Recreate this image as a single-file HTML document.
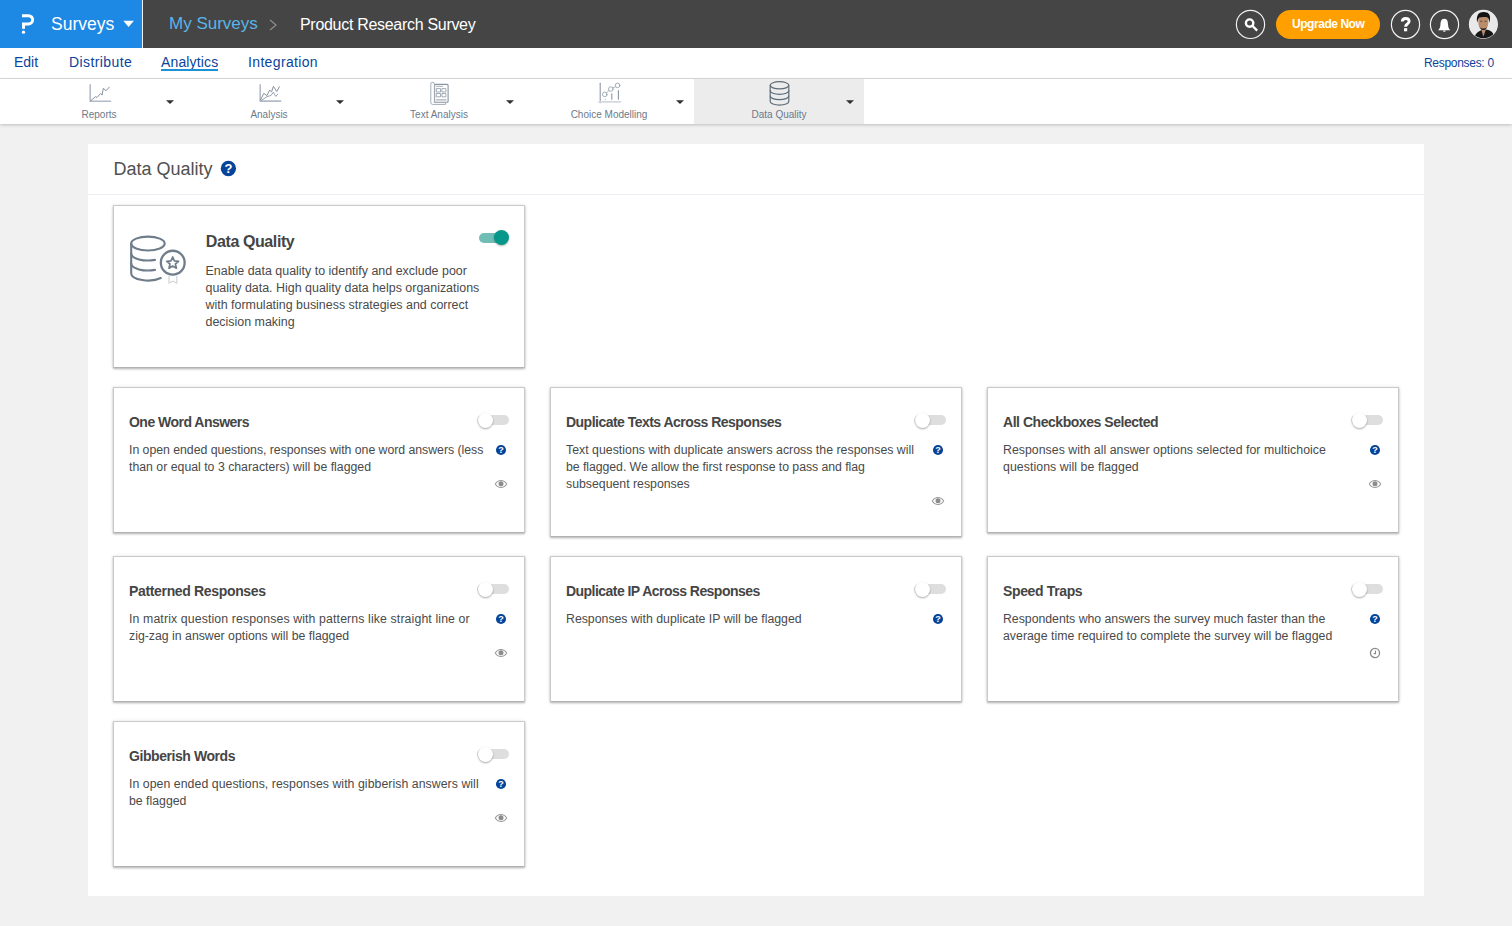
<!DOCTYPE html>
<html><head><meta charset="utf-8">
<style>
*{box-sizing:border-box;margin:0;padding:0}
html,body{width:1512px;height:926px;overflow:hidden;background:#f1f1f1;font-family:"Liberation Sans",sans-serif;position:relative}
.a{position:absolute;white-space:nowrap}
#top{position:absolute;left:0;top:0;width:1512px;height:48px;background:#454545}
#brand{position:absolute;left:0;top:0;width:142px;height:48px;background:#1e88e5}
#sep{position:absolute;left:142px;top:0;width:1px;height:48px;background:#f2f2f2}
#nav{position:absolute;left:0;top:48px;width:1512px;height:31px;background:#fff;border-bottom:1px solid #dcdcdc}
.nv{position:absolute;top:0;font-size:14px;line-height:14px;color:#0a449b}
#tb{position:absolute;left:0;top:79px;width:1512px;height:45px;background:#fff;box-shadow:0 1px 3px rgba(0,0,0,.22)}
.tab{position:absolute;top:0;width:170px;height:45px}
.tab .cap{position:absolute;left:0;width:140px;text-align:center;font-size:10px;line-height:10px;top:30px;color:#6d7a88}
.tri{position:absolute;width:0;height:0;border-left:4px solid transparent;border-right:4px solid transparent;border-top:4px solid #2f2f2f}
#panel{position:absolute;left:88px;top:144px;width:1336px;height:752px;background:#fff}
#ph{position:absolute;left:0;top:0;width:1336px;height:51px;border-bottom:1px solid #eceef3}
.card{position:absolute;width:412px;background:#fff;border:1px solid #cacaca;border-bottom-color:#b2b2b2;box-shadow:0 1px 2px rgba(0,0,0,.28),0 0 5px rgba(0,0,0,.07)}
.ttl{position:absolute;font-weight:bold;font-size:14px;line-height:14px;letter-spacing:-0.6px;color:#454545;white-space:nowrap}
.body{position:absolute;font-size:12.3px;line-height:17px;color:#4a4a4a;white-space:nowrap}
.tg{position:absolute;width:32px;height:10px;border-radius:5px;background:#dedede}
.tg i{position:absolute;top:-2.5px;left:1px;width:15px;height:15px;border-radius:50%;background:#fff;box-shadow:0 1px 2px rgba(0,0,0,.35)}
.tg.on{background:#70bdb5;width:29px}
.tg.on i{left:15px;top:-3px;background:#05978a;box-shadow:0 1px 2px rgba(0,0,0,.3)}
.hq{position:absolute;width:10px;height:10px}
.eye{position:absolute;width:12px;height:8px}
</style></head><body>
<div id="top">
  <div id="brand"></div>
  <div id="sep"></div>
  <svg class="a" style="left:0;top:0" width="142" height="48" viewBox="0 0 142 48">
    <path d="M22,15.7 H28.5 A4.1,4.1 0 0 1 28.5,23.9 H23.5 V28.7" fill="none" stroke="#fff" stroke-width="3"/>
    <circle cx="23.5" cy="32.2" r="1.6" fill="#fff"/>
    <path d="M123.3,20.8 H133.9 L128.6,27 Z" fill="#fff"/>
  </svg>
  <div class="a" style="left:51px;top:15px;font-size:17.5px;line-height:18px;color:#fff">Surveys</div>
  <div class="a" style="left:169px;top:15px;font-size:17px;line-height:18px;color:#5ab4ea">My Surveys</div>
  <svg class="a" style="left:266px;top:17px" width="14" height="16" viewBox="0 0 14 16"><path d="M4,3 L10,8 L4,13" fill="none" stroke="#8c8c8c" stroke-width="1.3"/></svg>
  <div class="a" style="left:300px;top:16px;font-size:16px;line-height:17px;letter-spacing:-0.3px;color:#fff">Product Research Survey</div>
  <svg class="a" style="left:1230px;top:0" width="282" height="48" viewBox="1230 0 282 48">
    <circle cx="1250.5" cy="24.4" r="14.1" fill="none" stroke="#f2f2f2" stroke-width="1.2"/>
    <circle cx="1249.6" cy="23.1" r="3.7" fill="none" stroke="#fff" stroke-width="2.4"/>
    <path d="M1252.3,25.8 L1257.2,30.6" stroke="#fff" stroke-width="2.3"/>
    <rect x="1276" y="10" width="104" height="29" rx="14.5" fill="#ffa000"/>
    <circle cx="1405.5" cy="24.5" r="14.1" fill="none" stroke="#f2f2f2" stroke-width="1.2"/>
    <circle cx="1444.5" cy="24.5" r="14.1" fill="none" stroke="#f2f2f2" stroke-width="1.2"/>
    <path d="M1444.3,18.7 C1441.2,18.7 1440.6,21.5 1440.4,25 C1440.2,27.6 1439.6,28.9 1438,30.3 L1450.4,30.3 C1448.8,28.9 1448.3,27.6 1448.1,25 C1447.9,21.5 1447.4,18.7 1444.3,18.7 Z" fill="#fff"/>
    <path d="M1442.8,30.5 A1.6,1.6 0 0 0 1445.9,30.5 Z" fill="#fff"/>
    <defs><clipPath id="av"><circle cx="1483.4" cy="24.3" r="14"/></clipPath></defs>
    <circle cx="1483.4" cy="24.3" r="14.5" fill="#f4f4f4"/>
    <g clip-path="url(#av)">
      <rect x="1469" y="9" width="30" height="31" fill="#e9e9ea"/>
      <path d="M1474,40 C1474.5,35 1476.5,32.5 1480.5,30.5 L1483.3,29.5 L1487,29.8 C1491,30.5 1494,32.5 1495,40 Z" fill="#161616"/>
      <path d="M1481.2,29.2 L1483.3,36.8 L1486,29.3 Z" fill="#b48a70"/>
      <path d="M1478.3,19.5 C1478.3,16.5 1480.5,15.5 1483.3,15.5 C1486.3,15.5 1488.4,16.5 1488.4,19.5 L1488.2,24 C1487.8,27.8 1485.8,29.8 1483.3,29.8 C1480.8,29.8 1478.8,27.8 1478.4,24 Z" fill="#b98d6c"/>
      <path d="M1479.5,27 C1480.5,29.5 1482,30 1483.3,30 C1484.8,30 1486.2,29.5 1487.2,27 C1486,28.3 1484.8,28.6 1483.3,28.6 C1481.8,28.6 1480.6,28.3 1479.5,27 Z" fill="#2a1e1a"/>
      <path d="M1477.2,22.8 C1476.2,17 1477.6,13.5 1480.6,12.4 C1482.5,11.6 1485.5,11.7 1487.5,12.8 C1490.2,14.3 1490.6,18.2 1489.5,22.8 C1489,20 1488.6,18.4 1487.6,17.6 C1485.6,16.8 1481.5,16.8 1479.2,17.6 C1478.2,18.6 1477.8,20.3 1477.2,22.8 Z" fill="#121212"/>
      <path d="M1480.3,21.3 H1482.2 M1484.6,21.3 H1486.5" stroke="#4a3328" stroke-width="0.9"/>
    </g>
  </svg>
  <div class="a" style="left:1292px;top:17.5px;font-size:12px;line-height:12px;font-weight:bold;letter-spacing:-0.45px;color:#fff">Upgrade Now</div>
  <svg class="a" style="left:1390px;top:10px" width="30" height="30" viewBox="1390 10 30 30"><path d="M1402.3,21.6 C1402.3,19.5 1403.6,18.5 1405.7,18.5 C1407.8,18.5 1409.1,19.7 1409.1,21.3 C1409.1,23 1407.9,23.5 1407,24.2 C1406,24.9 1405.6,25.4 1405.6,26.8" fill="none" stroke="#fff" stroke-width="2.9"/><rect x="1404" y="28.2" width="3.2" height="3.1" fill="#fff"/></svg>
</div>
<div id="nav">
  <div class="nv" style="left:14px;top:7px">Edit</div>
  <div class="nv" style="left:69px;top:7px;letter-spacing:0.4px">Distribute</div>
  <div class="nv" style="left:161px;top:7px;letter-spacing:0.15px">Analytics</div>
  <div class="a" style="left:161px;top:21px;width:57px;height:2px;background:#1e90d6"></div>
  <div class="nv" style="left:248px;top:7px;letter-spacing:0.35px">Integration</div>
  <div class="a" style="left:1424px;top:9px;font-size:12px;line-height:12px;letter-spacing:-0.3px;color:#0a449b">Responses: 0</div>
</div>
<div id="tb">
  <div class="a" style="left:694px;top:0;width:170px;height:45px;background:#ececec"></div>
  <svg class="a" style="left:0;top:-79px" width="900" height="124" viewBox="0 0 900 124">
    <g fill="none" stroke-linecap="round" stroke-linejoin="round">
      <!-- reports -->
      <path d="M90.2,84.7 V101.2 H110.5" stroke="#b3bcc6" stroke-width="1.6"/>
      <path d="M90.5,101 L95.4,96.7 L97,97.4 L100.6,93.5 L102.1,95.1 L103.3,88.3 L106.1,90.7 L109.3,87.1" stroke="#7b8794" stroke-width="0.9"/>
      <!-- analysis -->
      <path d="M260.2,84.7 V101.1 H280.7" stroke="#b3bcc6" stroke-width="1.6"/>
      <path d="M260.7,99.8 L263.8,93.3 L266.9,95.6 L269.5,90.2 L271.6,91.7 L273.4,86.3 L276.8,91.5 L279.4,86.8" stroke="#7b8794" stroke-width="0.9"/>
      <path d="M260.7,100.8 L266.9,96.7 L271.1,95.4 L273.2,92.2 L275.8,96.4 L277.8,94.1" stroke="#8d98a4" stroke-width="0.9"/>
      <!-- text analysis -->
      <rect x="434.6" y="84.4" width="13.5" height="17.8" rx="1" stroke="#8995a2" stroke-width="1.1"/>
      <path d="M434.4,102.4 V84 A1.8,1.8 0 0 0 430.8,84 V102.6 A1.8,1.8 0 0 0 432.6,104.4 H445.6 V102.4" stroke="#a3adb8" stroke-width="1"/>
      <path d="M436.5,86.3 H442.5" stroke="#9aa4af" stroke-width="0.9"/>
      <rect x="436.7" y="88.6" width="3.8" height="3.4" stroke="#98a3ae" stroke-width="0.9"/>
      <rect x="442.3" y="88.6" width="3.6" height="3.4" stroke="#98a3ae" stroke-width="0.9"/>
      <rect x="436.7" y="93.5" width="3.8" height="3.3" stroke="#98a3ae" stroke-width="0.9"/>
      <rect x="442.3" y="93.5" width="3.6" height="3.3" stroke="#98a3ae" stroke-width="0.9"/>
      <path d="M436.5,99.8 H446" stroke="#a6b0ba" stroke-width="1.2"/>
      <!-- choice modelling -->
      <path d="M600.2,83.3 V102.8" stroke="#8e99a5" stroke-width="1.1"/>
      <path d="M599,101.9 H620.5" stroke="#d3d8de" stroke-width="1.6"/>
      <path d="M606.3,93 L609,90.5 M612.4,88 L615.8,86.5" stroke="#a3adb8" stroke-width="0.9"/>
      <circle cx="604.8" cy="94.4" r="2.3" stroke="#9aa4af" stroke-width="0.9"/>
      <circle cx="610.8" cy="89.1" r="2.3" stroke="#9aa4af" stroke-width="0.9"/>
      <circle cx="617.6" cy="85.4" r="2.3" stroke="#9aa4af" stroke-width="0.9"/>
      <path d="M611.8,93.8 V99.2 M618.4,90.6 V99.2" stroke="#8995a2" stroke-width="1.1"/>
      <circle cx="605.3" cy="99.3" r="0.5" fill="#8995a2" stroke="none"/>
      <!-- database -->
      <ellipse cx="779.5" cy="85.3" rx="9.3" ry="3.6" stroke="#5f6c79" stroke-width="1.2"/>
      <path d="M770.2,85.3 V101.5 A9.3,3.6 0 0 0 788.8,101.5 V85.3" stroke="#5f6c79" stroke-width="1.2"/>
      <path d="M770.2,90.7 A9.3,3.6 0 0 0 788.8,90.7 M770.2,96.1 A9.3,3.6 0 0 0 788.8,96.1" stroke="#5f6c79" stroke-width="1.2"/>
    </g>
    <g fill="#2f2f2f">
      <path d="M166,100.2 H174 L170,104 Z"/>
      <path d="M336,100.2 H344 L340,104 Z"/>
      <path d="M506,100.2 H514 L510,104 Z"/>
      <path d="M676,100.2 H684 L680,104 Z"/>
      <path d="M846,100.2 H854 L850,104 Z"/>
    </g>
  </svg>
  <div class="a cap" style="left:14px;top:31px;width:170px;text-align:center;font-size:10px;line-height:10px;color:#6d7a88">Reports</div>
  <div class="a cap" style="left:184px;top:31px;width:170px;text-align:center;font-size:10px;line-height:10px;color:#6d7a88">Analysis</div>
  <div class="a cap" style="left:354px;top:31px;width:170px;text-align:center;font-size:10px;line-height:10px;color:#6d7a88">Text Analysis</div>
  <div class="a cap" style="left:524px;top:31px;width:170px;text-align:center;font-size:10px;line-height:10px;color:#6d7a88">Choice Modelling</div>
  <div class="a cap" style="left:694px;top:31px;width:170px;text-align:center;font-size:10px;line-height:10px;color:#6d7a88">Data Quality</div>
</div>
<div id="panel">
<div id="ph">
<div class="a" style="left:25.5px;top:16px;font-size:18px;line-height:18px;color:#505050">Data Quality</div>
<svg class="a" style="left:132px;top:16px" width="17" height="17" viewBox="0 0 17 17"><circle cx="8.4" cy="8.5" r="7.65" fill="#06449a"/><text x="8.4" y="13.2" text-anchor="middle" font-family="Liberation Sans" font-weight="bold" font-size="13" fill="#fff">?</text></svg>
</div>
<div class="card" style="left:25px;top:61px;height:163px">
<svg class="a" style="left:0;top:0" width="100" height="100" viewBox="114 206 100 100">
 <g fill="none" stroke="#6f7c8a" stroke-width="2.1" stroke-linecap="round">
  <ellipse cx="147.95" cy="243.55" rx="16.75" ry="6.95"/>
  <path d="M131.2,253.55 A16.75,6.95 0 0 0 155,259.85"/>
  <path d="M131.2,263.55 A16.75,6.95 0 0 0 155,269.85"/>
  <path d="M131.2,243.55 V273.55 A16.75,6.95 0 0 0 160.8,278"/>
  <circle cx="172.75" cy="262.65" r="11.9" stroke-width="2.3"/>
 </g>
 <path d="M169,275.8 V283 L172.9,281.2 L176.8,283 V275.8" fill="none" stroke="#d3d7dc" stroke-width="1.3"/>
 <path d="M172.7,257 L174.4,260.9 L178.6,261.3 L175.4,264 L176.4,268.2 L172.7,266 L169,268.2 L170,264 L166.8,261.3 L171,260.9 Z" fill="none" stroke="#6f7c8a" stroke-width="1.7" stroke-linejoin="round"/>
</svg>
<div class="ttl" style="left:91.8px;top:28px;font-size:16px;letter-spacing:-0.4px;line-height:16px">Data Quality</div>
<div class="body" style="left:91.5px;top:56.5px;font-size:12.45px">Enable data quality to identify and exclude poor<br>quality data. High quality data helps organizations<br>with formulating business strategies and correct<br>decision making</div>
<div class="tg on" style="left:365px;top:27px"><i></i></div>
</div>
<div class="card" style="left:25px;top:243px;height:146px"><div class="ttl" style="left:15.0px;top:26.5px;letter-spacing:-0.52px">One Word Answers</div><div class="body" style="left:15.0px;top:54px"><span style="letter-spacing:-0.03px">In open ended questions, responses with one word answers (less</span><br>than or equal to 3 characters) will be flagged</div><div class="tg" style="left:363px;top:27px"><i></i></div><svg class="a" style="left:380.95px;top:56px" width="12" height="12" viewBox="0 0 12 12"><circle cx="6" cy="6" r="5.05" fill="#06449a"/><text x="6" y="9.3" text-anchor="middle" font-family="Liberation Sans" font-weight="bold" font-size="9" fill="#fff">?</text></svg><svg class="a" style="left:379.85px;top:91px" width="14" height="10" viewBox="0 0 14 10"><path d="M1.3,5 C3,2.3 5,1.5 7,1.5 C9,1.5 11,2.3 12.7,5 C11,7.7 9,8.5 7,8.5 C5,8.5 3,7.7 1.3,5 Z" fill="none" stroke="#9a9a9a" stroke-width="1.1"/><circle cx="7" cy="4.8" r="2.5" fill="#8c8c8c"/></svg></div>
<div class="card" style="left:462px;top:243px;height:150px"><div class="ttl" style="left:15.0px;top:26.5px;letter-spacing:-0.52px">Duplicate Texts Across Responses</div><div class="body" style="left:15.0px;top:54px"><span style="letter-spacing:0.024px">Text questions with duplicate answers across the responses will</span><br><span style="letter-spacing:-0.056px">be flagged. We allow the first response to pass and flag</span><br>subsequent responses</div><div class="tg" style="left:363px;top:27px"><i></i></div><svg class="a" style="left:380.95px;top:56px" width="12" height="12" viewBox="0 0 12 12"><circle cx="6" cy="6" r="5.05" fill="#06449a"/><text x="6" y="9.3" text-anchor="middle" font-family="Liberation Sans" font-weight="bold" font-size="9" fill="#fff">?</text></svg><svg class="a" style="left:379.85px;top:108px" width="14" height="10" viewBox="0 0 14 10"><path d="M1.3,5 C3,2.3 5,1.5 7,1.5 C9,1.5 11,2.3 12.7,5 C11,7.7 9,8.5 7,8.5 C5,8.5 3,7.7 1.3,5 Z" fill="none" stroke="#9a9a9a" stroke-width="1.1"/><circle cx="7" cy="4.8" r="2.5" fill="#8c8c8c"/></svg></div>
<div class="card" style="left:899px;top:243px;height:146px"><div class="ttl" style="left:15.0px;top:26.5px;letter-spacing:-0.46px">All Checkboxes Selected</div><div class="body" style="left:15.0px;top:54px"><span style="letter-spacing:0.04px">Responses with all answer options selected for multichoice</span><br><span style="letter-spacing:0.07px">questions will be flagged</span></div><div class="tg" style="left:363px;top:27px"><i></i></div><svg class="a" style="left:380.95px;top:56px" width="12" height="12" viewBox="0 0 12 12"><circle cx="6" cy="6" r="5.05" fill="#06449a"/><text x="6" y="9.3" text-anchor="middle" font-family="Liberation Sans" font-weight="bold" font-size="9" fill="#fff">?</text></svg><svg class="a" style="left:379.85px;top:91px" width="14" height="10" viewBox="0 0 14 10"><path d="M1.3,5 C3,2.3 5,1.5 7,1.5 C9,1.5 11,2.3 12.7,5 C11,7.7 9,8.5 7,8.5 C5,8.5 3,7.7 1.3,5 Z" fill="none" stroke="#9a9a9a" stroke-width="1.1"/><circle cx="7" cy="4.8" r="2.5" fill="#8c8c8c"/></svg></div>
<div class="card" style="left:25px;top:412px;height:146px"><div class="ttl" style="left:15.0px;top:26.5px;letter-spacing:-0.34px">Patterned Responses</div><div class="body" style="left:15.0px;top:54px"><span style="letter-spacing:0.124px">In matrix question responses with patterns like straight line or</span><br>zig-zag in answer options will be flagged</div><div class="tg" style="left:363px;top:27px"><i></i></div><svg class="a" style="left:380.95px;top:56px" width="12" height="12" viewBox="0 0 12 12"><circle cx="6" cy="6" r="5.05" fill="#06449a"/><text x="6" y="9.3" text-anchor="middle" font-family="Liberation Sans" font-weight="bold" font-size="9" fill="#fff">?</text></svg><svg class="a" style="left:379.85px;top:91px" width="14" height="10" viewBox="0 0 14 10"><path d="M1.3,5 C3,2.3 5,1.5 7,1.5 C9,1.5 11,2.3 12.7,5 C11,7.7 9,8.5 7,8.5 C5,8.5 3,7.7 1.3,5 Z" fill="none" stroke="#9a9a9a" stroke-width="1.1"/><circle cx="7" cy="4.8" r="2.5" fill="#8c8c8c"/></svg></div>
<div class="card" style="left:462px;top:412px;height:146px"><div class="ttl" style="left:15.0px;top:26.5px;letter-spacing:-0.54px">Duplicate IP Across Responses</div><div class="body" style="left:15.0px;top:54px">Responses with duplicate IP will be flagged</div><div class="tg" style="left:363px;top:27px"><i></i></div><svg class="a" style="left:380.95px;top:56px" width="12" height="12" viewBox="0 0 12 12"><circle cx="6" cy="6" r="5.05" fill="#06449a"/><text x="6" y="9.3" text-anchor="middle" font-family="Liberation Sans" font-weight="bold" font-size="9" fill="#fff">?</text></svg></div>
<div class="card" style="left:899px;top:412px;height:146px"><div class="ttl" style="left:15.0px;top:26.5px;letter-spacing:-0.36px">Speed Traps</div><div class="body" style="left:15.0px;top:54px"><span style="letter-spacing:-0.02px">Respondents who answers the survey much faster than the</span><br><span style="letter-spacing:0.02px">average time required to complete the survey will be flagged</span></div><div class="tg" style="left:363px;top:27px"><i></i></div><svg class="a" style="left:380.95px;top:56px" width="12" height="12" viewBox="0 0 12 12"><circle cx="6" cy="6" r="5.05" fill="#06449a"/><text x="6" y="9.3" text-anchor="middle" font-family="Liberation Sans" font-weight="bold" font-size="9" fill="#fff">?</text></svg><svg class="a" style="left:379.85px;top:88.5px" width="14" height="14" viewBox="0 0 14 14"><circle cx="7" cy="7" r="4.55" fill="none" stroke="#8a8a8a" stroke-width="1.3"/><path d="M7.5,4.6 V7.6 H5.7" fill="none" stroke="#8a8a8a" stroke-width="1.1"/></svg></div>
<div class="card" style="left:25px;top:577px;height:146px"><div class="ttl" style="left:15.0px;top:26.5px;letter-spacing:-0.43px">Gibberish Words</div><div class="body" style="left:15.0px;top:54px"><span style="letter-spacing:0.05px">In open ended questions, responses with gibberish answers will</span><br>be flagged</div><div class="tg" style="left:363px;top:27px"><i></i></div><svg class="a" style="left:380.95px;top:56px" width="12" height="12" viewBox="0 0 12 12"><circle cx="6" cy="6" r="5.05" fill="#06449a"/><text x="6" y="9.3" text-anchor="middle" font-family="Liberation Sans" font-weight="bold" font-size="9" fill="#fff">?</text></svg><svg class="a" style="left:379.85px;top:91px" width="14" height="10" viewBox="0 0 14 10"><path d="M1.3,5 C3,2.3 5,1.5 7,1.5 C9,1.5 11,2.3 12.7,5 C11,7.7 9,8.5 7,8.5 C5,8.5 3,7.7 1.3,5 Z" fill="none" stroke="#9a9a9a" stroke-width="1.1"/><circle cx="7" cy="4.8" r="2.5" fill="#8c8c8c"/></svg></div>
</div>
</body></html>
